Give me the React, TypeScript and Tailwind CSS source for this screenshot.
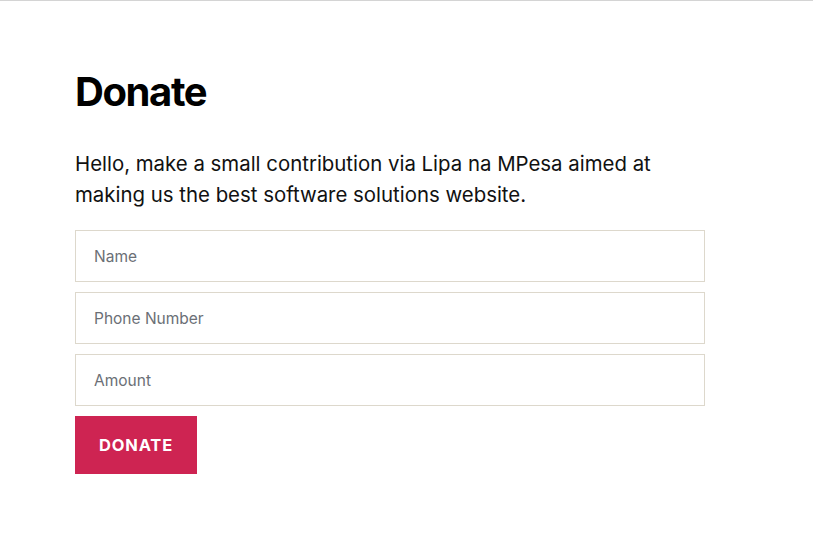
import React from 'react';

export default function App() {
  return (
    <div className="min-h-screen w-full bg-white border-t border-[#d4d4d4] font-['Inter',sans-serif] text-black">
      <div className="pl-[75px] pt-[69px] w-[705px]">
        <h1 className="text-[40px] font-bold leading-[44px] tracking-[-0.035em]">Donate</h1>
        <p className="mt-[34px] text-[20.4px] leading-[31px] text-[#111] max-w-[600px]">
          Hello, make a small contribution via Lipa na MPesa aimed at making us the best software solutions website.
        </p>
        <form className="mt-[20px] flex flex-col gap-[10px]" onSubmit={(e) => e.preventDefault()}>
          <input placeholder="Name" className="h-[52px] w-full border border-[#ddd8cc] px-[18px] text-[15.5px] outline-none placeholder:text-[#6b6f76]" />
          <input placeholder="Phone Number" className="h-[52px] w-full border border-[#ddd8cc] px-[18px] text-[15.5px] outline-none placeholder:text-[#6b6f76]" />
          <input placeholder="Amount" className="h-[52px] w-full border border-[#ddd8cc] px-[18px] text-[15.5px] outline-none placeholder:text-[#6b6f76]" />
          <div>
            <button type="submit" className="h-[58px] w-[122px] bg-[#ce2452] text-white text-[16.5px] font-bold tracking-[0.05em]">DONATE</button>
          </div>
        </form>
      </div>
    </div>
  );
}
